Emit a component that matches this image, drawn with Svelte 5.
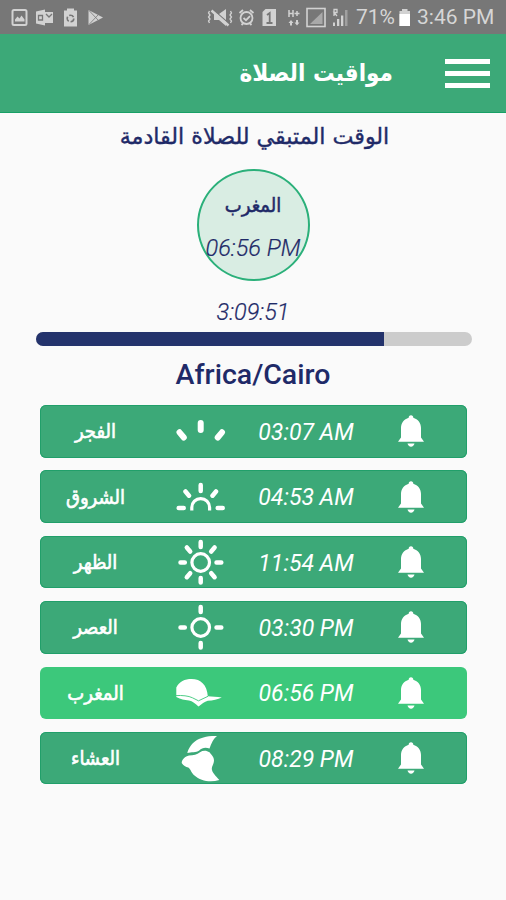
<script>
    let next = { name: "المغرب", time: "06:56 PM", left: "3:09:51", progress: 80 };

    let prayers = [
        { id: "fajr", name: "الفجر", time: "03:07 AM" },
        { id: "sunrise", name: "الشروق", time: "04:53 AM" },
        { id: "dhuhr", name: "الظهر", time: "11:54 AM" },
        { id: "asr", name: "العصر", time: "03:30 PM" },
        { id: "maghrib", name: "المغرب", time: "06:56 PM" },
        { id: "isha", name: "العشاء", time: "08:29 PM" },
    ];
</script>

<div class="screen">
    <div class="status">
        <svg class="notifications" width="104" height="34" viewBox="0 0 104 34">
            <rect x="12.5" y="10" width="14" height="15" rx="1.5" fill="none" stroke="#d2d2d2" stroke-width="2" />
            <path d="M15 21.500v-2l2.500-3 2 2 2-3 3 4v2z" />
            <path d="M36 11.500l9-2v16l-9-2z" />
            <path d="M45 12h8v11h-8z" />
            <path d="M38.500 15.500h4v4.500h-4zM46 14l3 3 3-3" fill="none" stroke="#777" stroke-width="1.300" />
            <path d="M64 10.500h3v-2h7v2h3v16H64z" />
            <circle cx="70.500" cy="18.500" r="3.300" fill="none" stroke="#777" stroke-width="1.600" stroke-dasharray="5 1.900" />
            <path d="M88.500 10v15l14.500-7.500z" />
            <path d="M89 10.500l9 9.500M89 24.500l9-9.500" stroke="#777" stroke-width=".8" />
        </svg>
        <svg class="system" width="148" height="34" viewBox="205 0 148 34">
            <path d="M214 14h5l7-5v17l-7-6h-5z" />
            <path d="M213 9.500l17 15" stroke="#777" stroke-width="1.200" />
            <path d="M211.500 10.500l17 15" stroke="#d2d2d2" stroke-width="2.500" />
            <path d="M209.500 11l-1 2 1.500 2-1.500 2 1.500 2-1.500 2 1 2M230.500 11l1 2-1.500 2 1.500 2-1.500 2 1.500 2-1 2" fill="none" stroke="#d2d2d2" stroke-width="1.300" />
            <circle cx="246.500" cy="18" r="6" fill="none" stroke="#d2d2d2" stroke-width="1.800" />
            <path d="M239.500 13l3.500-3M253.500 13l-3.500-3M241.500 25l1.500-1.500M251.500 25l-1.500-1.500M243.500 18l2.500 2.200 4-4" fill="none" stroke="#d2d2d2" stroke-width="1.800" />
            <path d="M265.500 9H276v17h-13.500V12z" />
            <path d="M267 15l2.700-2v10M266.500 23h6" fill="none" stroke="#777" stroke-width="1.800" />
            <path d="M289 10v7M293 10v7M289 13.500h4M294.500 13.500h5M297 11v5" stroke="#d2d2d2" stroke-width="1.500" />
            <path d="M291 20l2.500 3h-1.500v2.500h-2V23h-1.500zM297 25.500l-2.500-3h1.500V20h2v2.500h1.500z" />
            <rect x="307" y="8.500" width="18" height="18" fill="none" stroke="#d2d2d2" stroke-width="1.600" />
            <path d="M322.500 12v12H310z" fill="#a9a9a9" />
            <path d="M334 16V9.500h3v3h-3l3 3.500" fill="none" stroke="#d2d2d2" stroke-width="1.300" />
            <path d="M333 22.500h2V26h-2zM337 19h2.300v7H337zM341 15.500h2.300V26H341z" />
            <path d="M345 10h2.500v16H345z" fill="#a0a0a0" />
        </svg>
        <span class="percent">71%</span>
        <svg class="battery" width="12" height="34" viewBox="0 0 12 34">
            <path d="M.5 11H3V9h5.500v2H11v15H.500z" />
            <path d="M.500 14H11v12H.500z" fill="#fff" />
        </svg>
        <span class="clock">3:46 PM</span>
    </div>

    <header>
        <h1 dir="rtl">مواقيت الصلاة</h1>
        <div class="menu">
            <i></i>
            <i></i>
            <i></i>
        </div>
    </header>

    <main>
        <h2 dir="rtl">الوقت المتبقي للصلاة القادمة</h2>
        <div class="next">
            <span class="next-name">{next.name}</span>
            <span class="next-time">{next.time}</span>
        </div>
        <div class="left">{next.left}</div>
        <div class="bar">
            <div class="fill" style="width: {next.progress}%"></div>
        </div>
        <h3>Africa/Cairo</h3>

        <div class="prayers">
            {#each prayers as prayer}
                <div class="prayer" class:active={prayer.name == next.name}>
                    <span class="name">{prayer.name}</span>
                    <svg class="sky" width="60" height="52" viewBox="0 0 60 52">
                        {#if prayer.id == "fajr"}
                            <path class="ray thick" d="M30.700 18v7M9.500 27.300l4.300 5.200M52 27.300l-4.300 5.200" />
                        {:else if prayer.id == "sunrise"}
                            <path class="ray" d="M30.700 14v6M15.500 20.500l3.500 4.200M46 20.500l-3.500 4.200M8.700 37h5M47.700 37h5" />
                            <path class="disc" d="M21.800 39.500v-3a8.900 8.900 0 0 1 17.800 0v3" />
                        {:else if prayer.id == "dhuhr" || prayer.id == "asr"}
                            <path class="ray" d="M30.700 6v5M30.700 42v4.500M10.500 26.500h4.300M46.500 26.500h4.800" />
                            {#if prayer.id == "dhuhr"}
                                <path class="ray" d="M16.800 11.500l3.400 4M44.600 11.500l-3.400 4M20.200 37.200l-3.400 4M41.200 37.200l3.400 4" />
                            {/if}
                            <circle class="disc" cx="30.700" cy="26.500" r="8.800" />
                        {:else if prayer.id == "maghrib"}
                            <path d="M6.300 30V20.500C9 14.500 15 12 21.500 12c9.500 0 15.500 6 16.300 17.300 4.500.3 9 .5 14 1.200-4 2-9 3-14 3.200-3.500 1-6 3-9.300 5.900-3-3-6-5.200-9.500-6-5-1-8-1-12.700-3.600z" />
                            <path class="seam" d="M6 28.600c6-.4 12.500.2 16.500 2.200l6 3 9.500-4.500" />
                        {:else}
                            <path d="M17.300 21C20 12 27 3.500 47 4c-4 3-5.500 7.500-7.500 12.500-4-1.500-7.500-.8-10.300 2-3.200 2.200-7.900 1.500-11.900 2.500z" />
                            <path d="M11.700 31c.3-4 3.300-6.500 7.300-7.500 4.500-.6 8-.7 11-3.300 3-2 6.500-2 9.500.1 1.500 2.200 4.500 4.200 4.500 8.200 0 3.500-2.300 5.500-2.200 8.500.3 3.500 4 7 7.500 11-9 2.800-18.800 1-24.800-4.500-3.500-3-3.500-6-6.200-8-2.500-.7-5-1.500-6.600-4.500z" />
                        {/if}
                    </svg>
                    <span class="time">{prayer.time}</span>
                    <svg class="bell" width="30" height="52" viewBox="0 0 30 52">
                        <path d="M15 10.200c1.500 0 2.300 1 2.300 2.600 4.700 1.500 7.700 5.200 7.700 10.200v9.500l3 4.200H2l3-4.200V23c0-5 3-8.700 7.700-10.200 0-1.600.8-2.600 2.300-2.600z" />
                        <path d="M11.500 38.600h7c-.5 2-1.800 3.200-3.500 3.200s-3-1.200-3.500-3.200z" />
                    </svg>
                </div>
            {/each}
        </div>
    </main>
</div>

<style>
    :global(body) {
        background: #fafafa;
    }

    .screen {
        height: 900px;
        overflow: hidden;
        background: #fafafa;
        color: #1f2a68;
        font-family: Roboto, "DejaVu Sans", sans-serif;
    }

    .status {
        height: 34px;
        display: flex;
        align-items: center;
        background: #777;
        color: #d6d6d6;
        font-size: 21px;
        line-height: 34px;
        white-space: nowrap;
    }

    .status svg {
        flex: none;
        fill: #d2d2d2;
    }

    .system {
        margin-left: 101px;
    }

    .percent {
        width: 43px;
        margin-left: 3px;
    }

    .clock {
        margin-left: 6px;
    }

    header {
        box-sizing: border-box;
        height: 79px;
        padding: 0 16px 0 0;
        border-bottom: 1px solid #18a066;
        display: flex;
        align-items: center;
        justify-content: flex-end;
        gap: 52px;
        background: #3ca978;
        color: #fff;
    }

    h1, h2, h3 {
        margin: 0;
        white-space: nowrap;
    }

    h1 {
        font: bold 24px/40px "DejaVu Sans Condensed", "DejaVu Sans", sans-serif;
    }

    .menu {
        width: 45px;
        display: grid;
        gap: 7px;
    }

    .menu i {
        height: 5px;
        background: #fff;
    }

    main {
        display: flex;
        flex-direction: column;
        align-items: center;
    }

    h2 {
        height: 56px;
        padding-left: 3px;
        font: 22.2px/46px "DejaVu Sans", sans-serif;
        -webkit-text-stroke: 0.4px;
    }

    .next {
        box-sizing: border-box;
        width: 113px;
        height: 112px;
        border: 2px solid #2bb07a;
        border-radius: 50%;
        display: flex;
        flex-direction: column;
        align-items: center;
        background: #d9ede3;
        white-space: nowrap;
    }

    .next-name {
        margin-top: 14px;
        font: 20px/40px "DejaVu Sans Condensed", "DejaVu Sans", sans-serif;
        -webkit-text-stroke: 0.5px;
    }

    .next-time {
        margin-top: 7px;
        font: italic 300 23.5px/32px Roboto, sans-serif;
        -webkit-text-stroke: 0.2px;
    }

    .left {
        margin-top: 15px;
        font: italic 300 23.5px/32px Roboto, sans-serif;
        -webkit-text-stroke: 0.2px;
    }

    .bar {
        width: 436px;
        height: 14px;
        margin: 4px 0 0 1px;
        border-radius: 7px;
        overflow: hidden;
        background: #ccc;
    }

    .fill {
        height: 100%;
        background: #24336c;
    }

    h3 {
        margin-top: 9px;
        font: 500 28.5px/40px Roboto, sans-serif;
    }

    .prayers {
        width: 427px;
        margin-top: 10px;
        display: grid;
        gap: 12.9px;
    }

    .prayer {
        height: 52.5px;
        display: grid;
        grid-template-columns: 112px 78px 152px 58px;
        align-items: center;
        border-radius: 6px;
        box-shadow: inset 0 0 0 1px #219f6a;
        background: #3ca978;
        color: #fff;
    }

    .prayer.active {
        background: #3cc87b;
        box-shadow: none;
    }

    .prayer svg {
        fill: #fff;
    }

    .name {
        text-align: center;
        font: 20px/40px "DejaVu Sans Condensed", "DejaVu Sans", sans-serif;
        -webkit-text-stroke: 0.6px;
    }

    .sky {
        justify-self: end;
    }

    .time {
        padding: 3px 0 0 1px;
        text-align: center;
        font: italic 400 23px/40px Roboto, sans-serif;
    }

    .bell {
        justify-self: center;
    }

    .prayer .ray {
        fill: none;
        stroke: #fff;
        stroke-width: 4.5;
        stroke-linecap: round;
    }

    .prayer .thick {
        stroke-width: 6;
    }

    .prayer .disc {
        fill: none;
        stroke: #fff;
        stroke-width: 3.2;
    }

    .prayer .seam {
        fill: none;
        stroke: #3cc87b;
        stroke-width: 0.9;
    }
</style>
